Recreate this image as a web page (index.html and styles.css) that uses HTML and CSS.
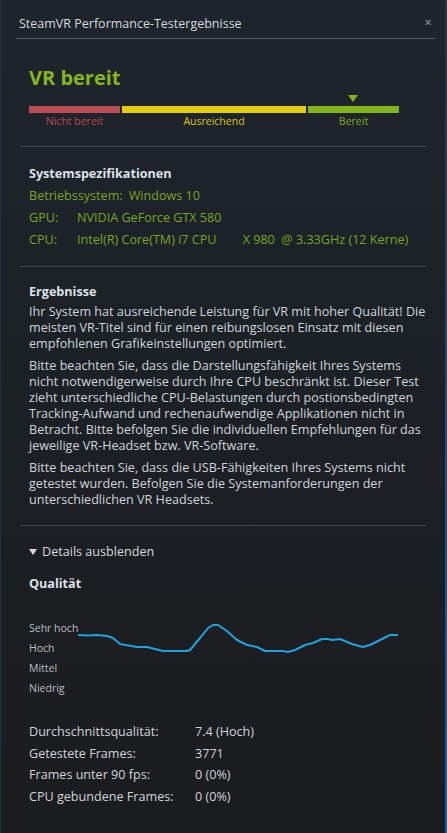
FILE: index.html
```html
<!DOCTYPE html>
<html lang="de">
<head>
  <meta charset="UTF-8">
  <meta name="viewport" content="width=device-width, initial-scale=1.0">
  <title>SteamVR Performance-Testergebnisse</title>
  <link rel="stylesheet" href="styles.css">
</head>
<body>
    <div class="window">
        <header class="titlebar">
            <span class="title">SteamVR Performance-Testergebnisse</span>
            <span class="close">&#x2715;</span>
        </header>

        <main class="content">
            <section class="verdict">
                <h1>VR bereit</h1>
                <div class="scale">
                    <div class="step step-bad">
                        <span class="bar"></span>
                        <span class="step-label">Nicht bereit</span>
                    </div>
                    <div class="step step-ok">
                        <span class="bar"></span>
                        <span class="step-label">Ausreichend</span>
                    </div>
                    <div class="step step-good is-current">
                        <span class="bar"></span>
                        <span class="step-label">Bereit</span>
                    </div>
                </div>
            </section>

            <section class="specs">
                <h2>Systemspezifikationen</h2>
                <div class="spec-row"><span class="spec-key">Betriebssystem:</span><span>Windows 10</span></div>
                <div class="spec-row"><span class="spec-key">GPU:</span><span>NVIDIA GeForce GTX 580</span></div>
                <div class="spec-row"><span class="spec-key">CPU:</span><span class="pre">Intel(R) Core(TM) i7 CPU        X 980  @ 3.33GHz (12 Kerne)</span></div>
            </section>

            <section class="results">
                <h2>Ergebnisse</h2>
                <p>Ihr System hat ausreichende Leistung für VR mit hoher Qualität! Die<br>
                meisten VR-Titel sind für einen reibungslosen Einsatz mit diesen<br>
                empfohlenen Grafikeinstellungen optimiert.</p>
                <p>Bitte beachten Sie, dass die Darstellungsfähigkeit Ihres Systems<br>
                nicht notwendigerweise durch Ihre CPU beschränkt ist. Dieser Test<br>
                zieht unterschiedliche CPU-Belastungen durch postionsbedingten<br>
                Tracking-Aufwand und rechenaufwendige Applikationen nicht in<br>
                Betracht. Bitte befolgen Sie die individuellen Empfehlungen für das<br>
                jeweilige VR-Headset bzw. VR-Software.</p>
                <p>Bitte beachten Sie, dass die USB-Fähigkeiten Ihres Systems nicht<br>
                getestet wurden. Befolgen Sie die Systemanforderungen der<br>
                unterschiedlichen VR Headsets.</p>
            </section>

            <section class="details">
                <div class="toggle"><span class="caret"></span>Details ausblenden</div>
                <h2>Qualität</h2>
                <div class="chart">
                    <ul class="levels">
                        <li>Sehr hoch</li>
                        <li>Hoch</li>
                        <li>Mittel</li>
                        <li>Niedrig</li>
                    </ul>
                    <svg class="plot" width="324" height="80" viewBox="0 0 324 80">
                        <polyline fill="none" stroke="#1fa3dd" stroke-width="2" stroke-linejoin="round"
                            points="0,17 9,17.5 19,17 29,18 35,20 42,26 59,29 69,29 85,33 109,33 112,32 122,20 130,10 135,7 140,7 149,13 159,22 169,27 179,29 187,33 205,33 210,34 217,32 227,27 235,25 244,21 250,21 254,22 262,21 274,26 285,29 292,27 302,22 312,17 320,17"/>
                    </svg>
                </div>
                <dl class="stats">
                    <dt>Durchschnittsqualität:</dt><dd>7.4 (Hoch)</dd>
                    <dt>Getestete Frames:</dt><dd>3771</dd>
                    <dt>Frames unter 90 fps:</dt><dd>0 (0%)</dd>
                    <dt>CPU gebundene Frames:</dt><dd>0 (0%)</dd>
                </dl>
            </section>
        </main>
    </div>
</body>
</html>
```

FILE: styles.css
```css
html, body {
    margin: 0;
    padding: 0;
    height: 100%;
}

body {
    font-family: 'Open Sans', 'Noto Sans', sans-serif;
    font-size: 12.6px;
    color: #cfd5db;
    background:
        linear-gradient(to bottom, #2c3238, #1660aa) right top / 2px 100% no-repeat,
        linear-gradient(to bottom, #1e252c, #1b1c1e);
}

.window {
    min-height: 100%;
    box-sizing: border-box;
    border-left: 1px solid #1f3046;
    padding-right: 2px;
}

/* Barra de título */
.titlebar {
    display: flex;
    align-items: center;
    justify-content: space-between;
    height: 38px;
    margin: 0 10px 0 15px;
    padding-left: 3px;
    border-bottom: 1px solid #565b60;
}

.title {
    font-size: 12.5px;
    color: #d5dade;
    margin-top: 8px;
}

.close {
    color: #8b9095;
    font-size: 10px;
    margin-top: 6px;
    margin-right: 3px;
}

.content {
    margin: 0 19px 0 19px;
}

section {
    padding-left: 9px;
    border-bottom: 1px solid #42474c;
}

h1 {
    margin: 0;
    padding-top: 26px;
    font-size: 20px;
    line-height: 26px;
    color: #86b51c;
}

h2 {
    margin: 0;
    font-size: 12.6px;
    font-weight: bold;
    color: #dde2e7;
}

/* Escala de estado */
.verdict {
    padding-bottom: 17px;
}

.scale {
    display: grid;
    grid-template-columns: 91px 184px 91px;
    gap: 2px;
    margin-top: 15px;
}

.step {
    display: flex;
    flex-direction: column;
    align-items: center;
    position: relative;
}

.bar {
    align-self: stretch;
    height: 7px;
}

.step-label {
    font-size: 10.5px;
    line-height: 16px;
}

.step-bad .bar { background: #bd4d57; }
.step-bad .step-label { color: #b84a54; }
.step-ok .bar { background: #e6cb13; }
.step-ok .step-label { color: #dcc513; }
.step-good .bar { background: #84b41c; }
.step-good .step-label { color: #7fae1e; }

.is-current::before {
    content: "";
    position: absolute;
    top: -11px;
    left: 50%;
    margin-left: -6px;
    border-left: 5px solid transparent;
    border-right: 5px solid transparent;
    border-top: 7px solid #84b41c;
}

/* Especificaciones */
.specs {
    padding-top: 17px;
    padding-bottom: 15px;
}

.specs h2 {
    line-height: 20px;
    margin-bottom: 1px;
}

.spec-row {
    display: flex;
    line-height: 22px;
    color: #78a61f;
}

.spec-key {
    min-width: 48px;
    padding-right: 6px;
    box-sizing: border-box;
}

.pre {
    white-space: pre;
}

/* Resultados */
.results {
    padding-top: 16px;
    padding-bottom: 11px;
}

.results h2 {
    line-height: 18px;
    margin-bottom: 3px;
}

.results p {
    margin: 0 0 6px;
    line-height: 16px;
    white-space: nowrap;
}

/* Detalles */
.details {
    border-bottom: none;
    padding-top: 17px;
}

.toggle {
    display: flex;
    align-items: center;
    gap: 5px;
    line-height: 18px;
    color: #d5dade;
}

.caret {
    width: 0;
    height: 0;
    border-left: 4.5px solid transparent;
    border-right: 4.5px solid transparent;
    border-top: 6px solid #d5dade;
}

.details h2 {
    margin-top: 14px;
    line-height: 18px;
}

.chart {
    display: flex;
    margin-top: 25px;
}

.levels {
    list-style: none;
    margin: 0;
    padding: 0;
    width: 49px;
    font-size: 10.5px;
    color: #b8bec4;
    white-space: nowrap;
}

.levels li {
    line-height: 20px;
}

.plot {
    display: block;
}

.stats {
    display: grid;
    grid-template-columns: 166px auto;
    margin: 23px 0 0;
    line-height: 21.7px;
}

.stats dt,
.stats dd {
    margin: 0;
}
```
